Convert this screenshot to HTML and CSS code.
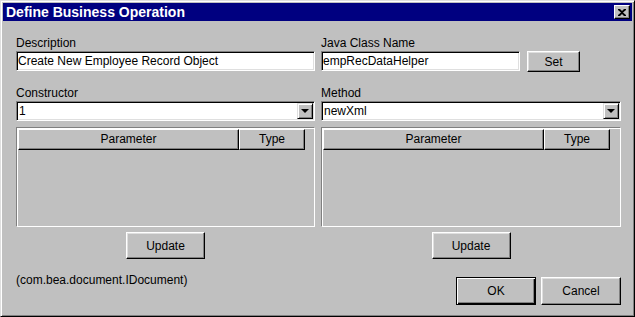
FILE: index.html
```html
<!DOCTYPE html>
<html lang="en">
<head>
    <meta charset="UTF-8">
    <title>Define Business Operation</title>
    <link rel="stylesheet" href="styles.css">
</head>
<body>
    <div class="window">
        <div class="titlebar">
            <span class="title">Define Business Operation</span>
            <span class="close">
                <svg width="8" height="7" viewBox="0 0 8 7"><path d="M0 0h2l2 2 2-2h2v1L5 3.5 8 6v1H6L4 5 2 7H0V6l3-2.5L0 1z" fill="#000"/></svg>
            </span>
        </div>

        <div class="content">
            <!-- left column -->
            <div class="column">
                <label class="label">Description</label>
                <div class="field-row">
                    <div class="field wide">Create New Employee Record Object</div>
                </div>

                <label class="label gap">Constructor</label>
                <div class="combo">
                    <span class="combo-value">1</span>
                    <span class="combo-btn"><span class="arrow"></span></span>
                </div>

                <div class="table">
                    <div class="table-head">
                        <span class="th param">Parameter</span>
                        <span class="th type">Type</span>
                    </div>
                </div>

                <div class="center">
                    <button class="btn update">Update</button>
                </div>

                <p class="info">(com.bea.document.IDocument)</p>
            </div>

            <!-- right column -->
            <div class="column">
                <label class="label">Java Class Name</label>
                <div class="field-row">
                    <div class="field short">empRecDataHelper</div>
                    <button class="btn set">Set</button>
                </div>

                <label class="label gap">Method</label>
                <div class="combo">
                    <span class="combo-value">newXml</span>
                    <span class="combo-btn"><span class="arrow"></span></span>
                </div>

                <div class="table">
                    <div class="table-head">
                        <span class="th param">Parameter</span>
                        <span class="th type">Type</span>
                    </div>
                </div>

                <div class="center">
                    <button class="btn update">Update</button>
                </div>

                <div class="actions">
                    <button class="btn dialog default">OK</button>
                    <button class="btn dialog">Cancel</button>
                </div>
            </div>
        </div>
    </div>
</body>
</html>
```

FILE: styles.css
```css
body {
    margin: 0;
    background: #c0c0c0;
    font-family: "Liberation Sans", Arial, sans-serif;
    font-size: 12px;
    color: #000;
}
.window {
    width: 635px;
    height: 317px;
    box-sizing: border-box;
    background: #c0c0c0;
    border: 1px solid;
    border-color: #dfdfdf #000 #000 #dfdfdf;
    box-shadow: inset 1px 1px #fff, inset -1px -1px #808080;
    padding: 2px;
}
.titlebar {
    height: 18px;
    background: #000080;
    color: #fff;
    display: flex;
    align-items: center;
    justify-content: space-between;
    padding: 0 2px 0 3px;
}
.title {
    font-weight: bold;
    font-size: 14px;
}
.close {
    width: 16px;
    height: 14px;
    box-sizing: border-box;
    background: #c0c0c0;
    border: 1px solid;
    border-color: #fff #000 #000 #fff;
    box-shadow: inset -1px -1px #808080;
    display: flex;
    align-items: center;
    justify-content: center;
}
.content {
    display: grid;
    grid-template-columns: 299px 300px;
    column-gap: 6px;
    padding: 15px 0 0 13px;
}
.column {
    display: flex;
    flex-direction: column;
}
.label {
    display: block;
    height: 15px;
    line-height: 15px;
}
.label.gap {
    margin-top: 14px;
}
.field-row {
    display: flex;
    align-items: flex-start;
    gap: 7px;
    height: 21px;
}
.field, .combo {
    height: 20px;
    box-sizing: border-box;
    background: #fff;
    border: 1px solid;
    border-color: #808080 #fff #fff #808080;
    box-shadow: inset 1px 1px #000, inset -1px -1px #dfdfdf;
    padding: 0 1px;
    line-height: 18px;
    white-space: nowrap;
}
.field.wide {
    width: 299px;
}
.field.short {
    width: 199px;
}
.combo {
    display: flex;
    justify-content: space-between;
    padding: 2px 2px 2px 2px;
    line-height: 14px;
}
.combo-btn {
    width: 16px;
    height: 16px;
    margin: -1px -1px 0 0;
    box-sizing: border-box;
    background: #c0c0c0;
    border: 1px solid;
    border-color: #dfdfdf #000 #000 #dfdfdf;
    box-shadow: inset 1px 1px #fff, inset -1px -1px #808080;
    display: flex;
    align-items: center;
    justify-content: center;
}
.arrow {
    width: 0;
    height: 0;
    border-left: 4px solid transparent;
    border-right: 4px solid transparent;
    border-top: 4px solid #000;
}
.table {
    height: 100px;
    margin-top: 6px;
    box-sizing: border-box;
    border: 1px solid;
    border-color: #808080 #fff #fff #808080;
    box-shadow: inset 1px 1px #fff;
    padding: 1px 0 0 1px;
}
.table-head {
    display: flex;
    height: 21px;
}
.th {
    box-sizing: border-box;
    height: 21px;
    line-height: 19px;
    text-align: center;
    border: 1px solid;
    border-color: #fff #000 #000 #fff;
    box-shadow: inset -1px -1px #808080;
}
.th.param {
    width: 221px;
}
.th.type {
    width: 66px;
}
.btn {
    font-family: inherit;
    font-size: 12px;
    color: #000;
    background: #c0c0c0;
    border: 1px solid;
    border-color: #fff #000 #000 #fff;
    box-shadow: inset -1px -1px #808080, inset 1px 1px #dfdfdf;
    padding: 0;
    box-sizing: border-box;
}
.btn.set {
    width: 53px;
    height: 21px;
}
.center {
    display: flex;
    justify-content: center;
    margin-top: 5px;
}
.btn.update {
    width: 79px;
    height: 27px;
}
.info {
    margin: 14px 0 0 0;
    line-height: 15px;
}
.actions {
    display: flex;
    justify-content: flex-end;
    gap: 5px;
    margin-top: 18px;
}
.btn.dialog {
    width: 80px;
    height: 28px;
}
.btn.default {
    border-color: #000;
    box-shadow: inset 1px 1px #fff, inset -1px -1px #000, inset -2px -2px #808080;
}
```
